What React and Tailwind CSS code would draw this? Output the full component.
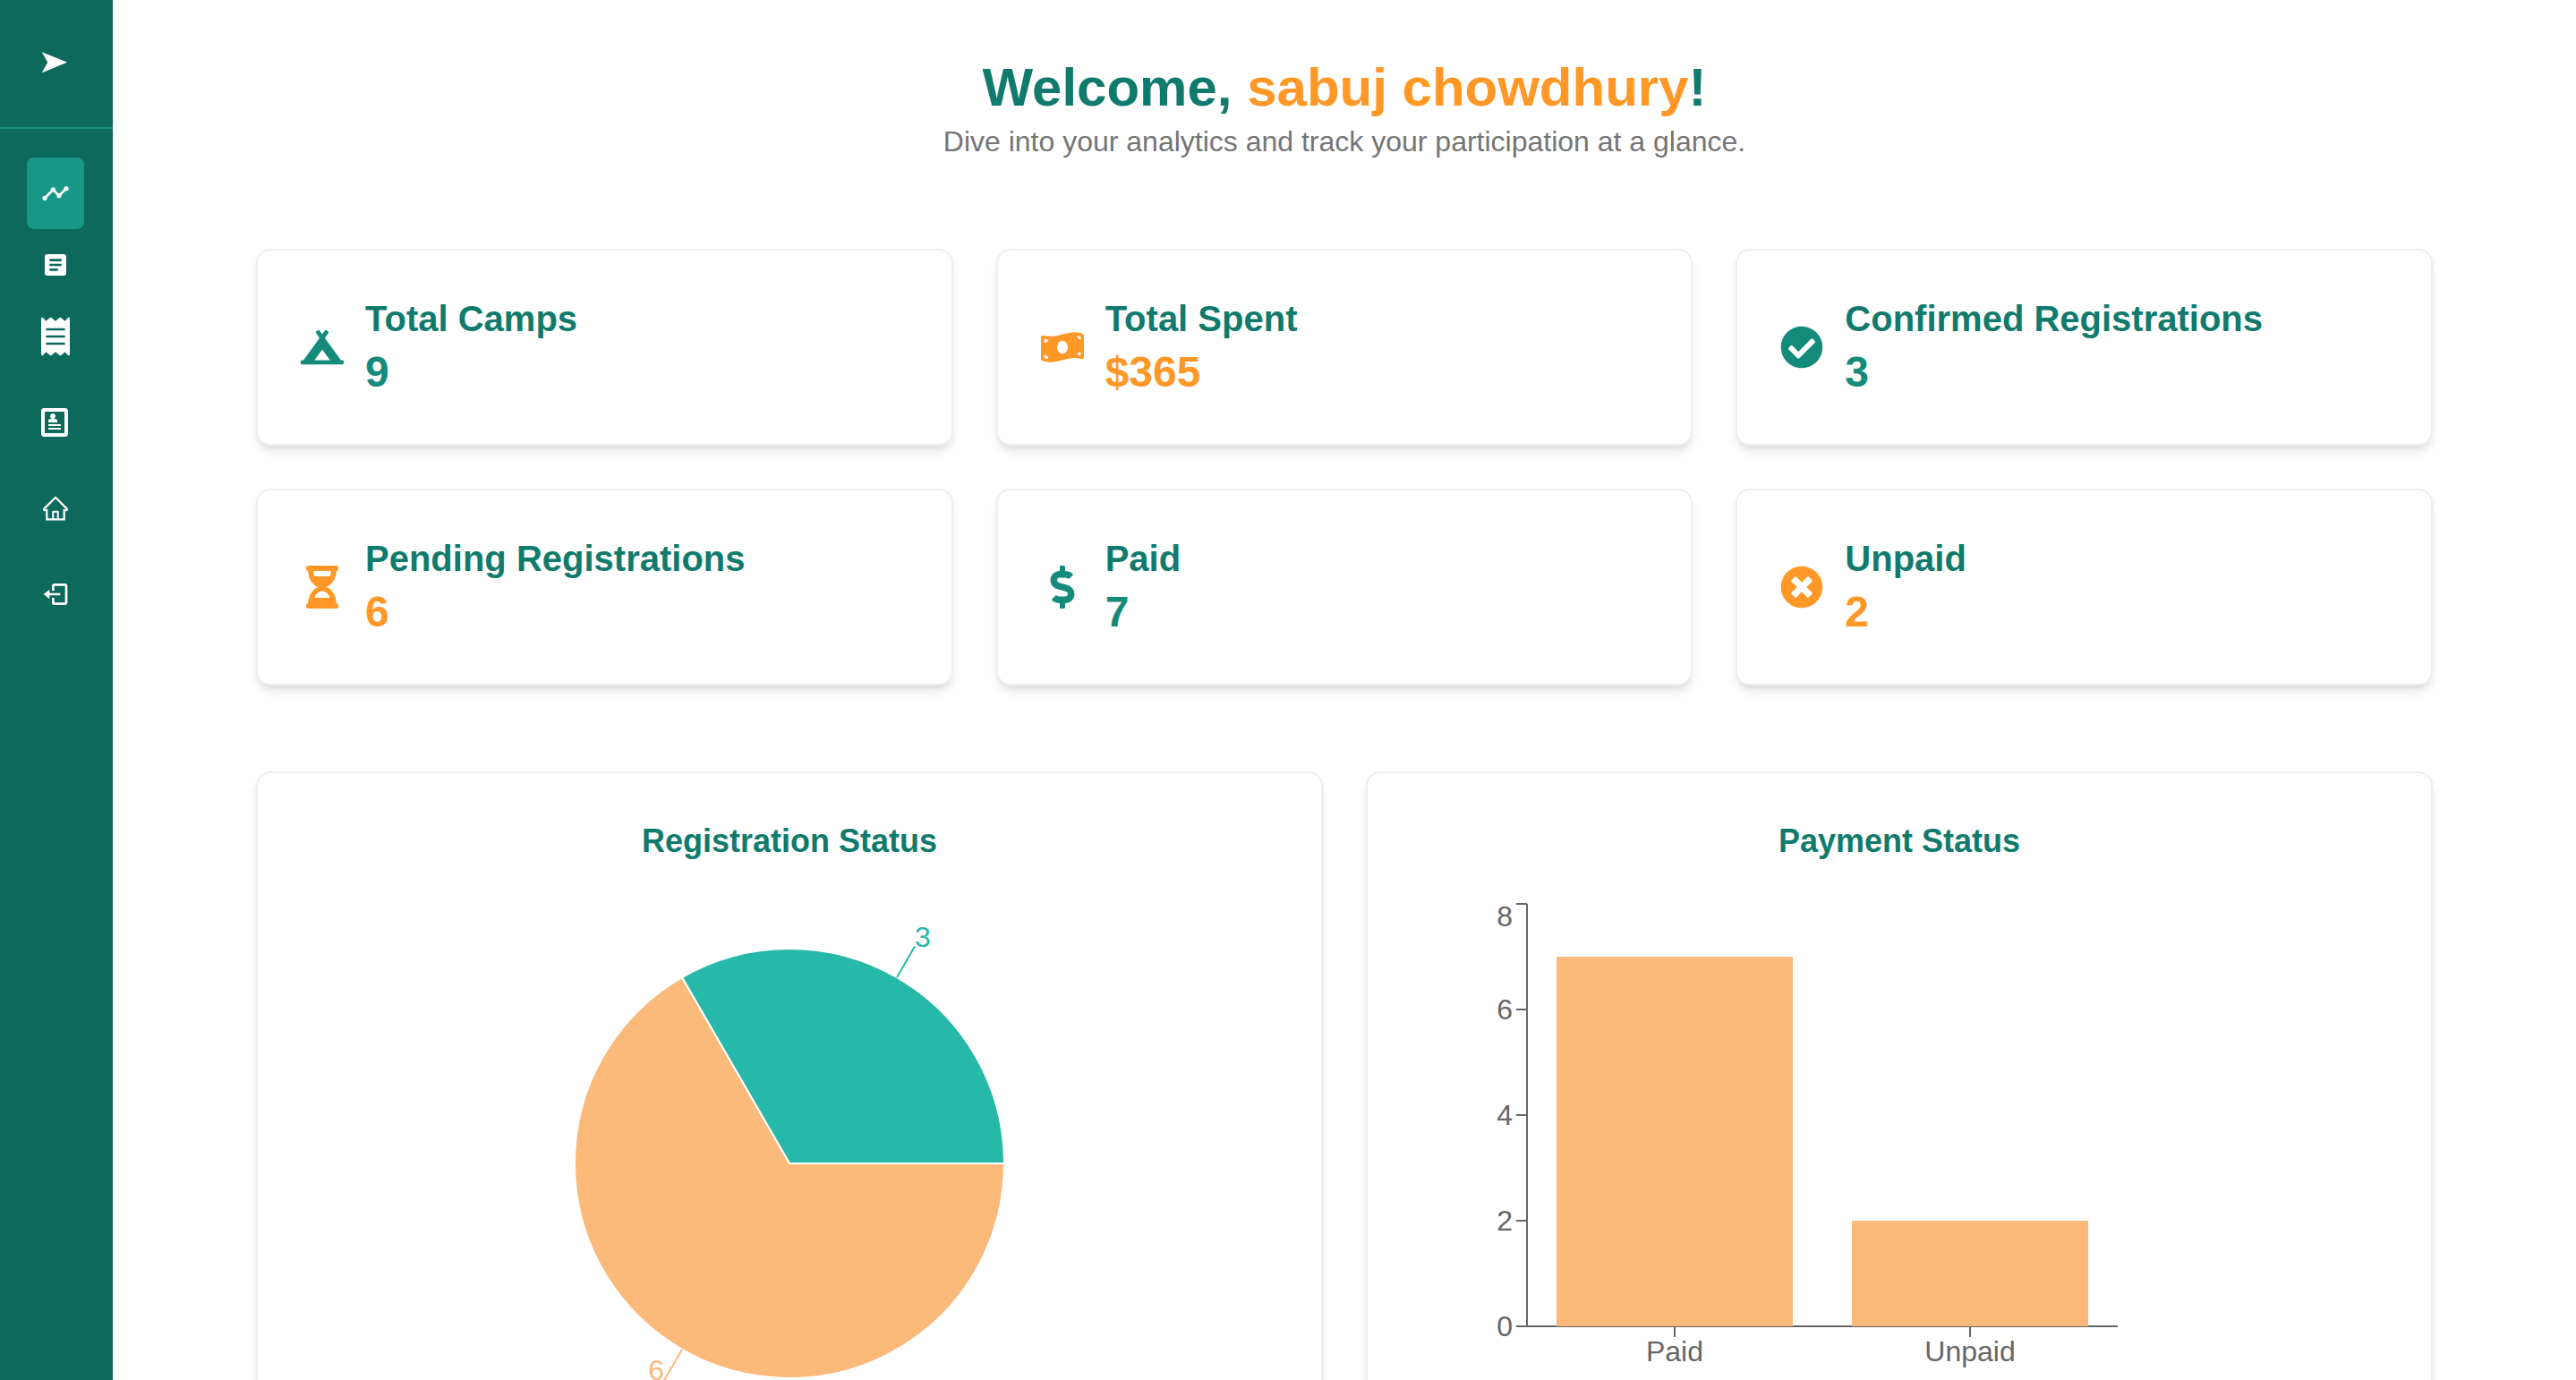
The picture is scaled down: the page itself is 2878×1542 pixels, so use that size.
import React from "react";
import { MdTimeline, MdArticle } from "react-icons/md";
import {
  FaReceipt,
  FaCampground,
  FaMoneyBillWave,
  FaCheckCircle,
  FaHourglassHalf,
  FaDollarSign,
  FaTimesCircle,
} from "react-icons/fa";
import { ImProfile } from "react-icons/im";
import { AiOutlineHome } from "react-icons/ai";
import { BiLogOut } from "react-icons/bi";

const mainLinks = [
  { label: "Analytics", Icon: MdTimeline, size: "size-8", active: true },
  { label: "Registered camps", Icon: MdArticle, size: "size-8" },
  { label: "Payment history", Icon: FaReceipt, size: "h-11 w-8" },
];

const stats = [
  { title: "Total Camps", value: "9", Icon: FaCampground, tone: "text-[#148a7b]" },
  { title: "Total Spent", value: "$365", Icon: FaMoneyBillWave, tone: "text-[#ff9827]" },
  { title: "Confirmed Registrations", value: "3", Icon: FaCheckCircle, tone: "text-[#148a7b]" },
  { title: "Pending Registrations", value: "6", Icon: FaHourglassHalf, tone: "text-[#ff9827]" },
  { title: "Paid", value: "7", Icon: FaDollarSign, tone: "text-[#148a7b]" },
  { title: "Unpaid", value: "2", Icon: FaTimesCircle, tone: "text-[#ff9827]" },
];

const cardClass =
  "rounded-2xl border-2 border-[#eeeeee] bg-white p-12 shadow-[0_8px_12px_-2px_rgba(0,0,0,0.1),0_4px_8px_-4px_rgba(0,0,0,0.1)]";

function NavLink({ label, Icon, size = "size-8", active }) {
  return (
    <a
      href="#"
      aria-label={label}
      className={`flex h-20 w-16 items-center justify-center rounded-lg ${active ? "bg-[#189788]" : ""}`}
    >
      <Icon className={size} />
    </a>
  );
}

function Sidebar() {
  return (
    <aside className="flex w-[126px] shrink-0 flex-col bg-[#0c695b] text-white">
      <div className="flex h-36 items-center border-b-2 border-[#189788] pl-[30px]">
        <button type="button" aria-label="Toggle menu" className="flex h-16 w-16 items-center justify-center">
          <svg viewBox="0 0 32 32" className="size-8" fill="currentColor">
            <path d="M1 3.6Q1 3.2 1.6 3.4L28.3 14.3Q29.1 14.7 28.3 15.1L1.6 26Q1 26.2 1 25.8L7.2 14.7Z" />
          </svg>
        </button>
      </div>
      <nav className="flex flex-col gap-4 pt-8 pl-[30px]">
        <div className="flex flex-col">
          {mainLinks.map((link) => (
            <NavLink key={link.label} {...link} />
          ))}
        </div>
        <NavLink label="Profile" Icon={ImProfile} />
        <NavLink label="Home" Icon={AiOutlineHome} />
        <button type="button" aria-label="Log out" className="flex h-20 w-16 items-center justify-center">
          <BiLogOut className="size-8" />
        </button>
      </nav>
    </aside>
  );
}

function StatCard({ title, value, Icon, tone }) {
  return (
    <div className={`flex items-center gap-6 ${cardClass}`}>
      <Icon className={`size-12 shrink-0 ${tone}`} />
      <div>
        <h3 className="text-[40px] leading-[56px] font-bold text-[#107b6c]">{title}</h3>
        <p className={`text-5xl leading-[64px] font-bold ${tone}`}>{value}</p>
      </div>
    </div>
  );
}

function RegistrationPie() {
  return (
    <svg viewBox="0 0 800 600" className="mx-auto h-[600px] w-[800px]" fontSize="32" role="img" aria-label="Registration status">
      <g stroke="#fff" strokeWidth="2">
        <path d="M400 300H640A240 240 0 0 0 280 92.15Z" fill="#26b8a8" />
        <path d="M400 300L280 92.15A240 240 0 1 0 640 300Z" fill="#fbb97a" />
      </g>
      <path d="M520 92.15L540 57.5" stroke="#26b8a8" strokeWidth="2" />
      <path d="M280 507.85L260 542.5" stroke="#fbb97a" strokeWidth="2" />
      <text x="540" y="58" fill="#26b8a8">3</text>
      <text x="260" y="542" textAnchor="end" fill="#fbb97a">6</text>
    </svg>
  );
}

function PaymentBars() {
  const bars = [
    { name: "Paid", count: 7 },
    { name: "Unpaid", count: 2 },
  ];
  return (
    <svg viewBox="0 0 800 600" className="h-[600px] w-[800px]" fontSize="32" role="img" aria-label="Payment status">
      <g stroke="#666" strokeWidth="2">
        <path d="M130 10V482H790" fill="none" />
        {[0, 2, 4, 6, 8].map((v) => (
          <path key={v} d={`M118 ${482 - v * 59}H130`} />
        ))}
        {bars.map((b, i) => (
          <path key={b.name} d={`M${295 + i * 330} 482V494`} />
        ))}
      </g>
      {bars.map((b, i) => (
        <rect key={b.name} x={163 + i * 330} y={482 - b.count * 59} width="264" height={b.count * 59} fill="#fbb97a" />
      ))}
      <g fill="#666" textAnchor="end">
        {[0, 2, 4, 6].map((v) => (
          <text key={v} x="114" y={493 - v * 59}>{v}</text>
        ))}
        <text x="114" y="35">8</text>
      </g>
      <g fill="#666" textAnchor="middle">
        {bars.map((b, i) => (
          <text key={b.name} x={295 + i * 330} y="521">{b.name}</text>
        ))}
      </g>
    </svg>
  );
}

function ChartCard({ title, children }) {
  return (
    <section className={cardClass}>
      <h3 className="mb-8 text-center text-4xl leading-[56px] font-bold text-[#107b6c]">{title}</h3>
      {children}
    </section>
  );
}

export default function App() {
  return (
    <div className="flex h-screen overflow-hidden bg-white font-['Liberation_Sans',Arial,sans-serif]">
      <Sidebar />
      <main className="min-w-0 flex-1 overflow-y-auto [scrollbar-width:none]">
        <div className="mx-auto max-w-[2560px] px-16 pt-[62px] pb-16">
          <header className="mb-24 text-center">
            <h1 className="text-6xl leading-[72px] font-bold text-[#107b6c]">
              Welcome, <span className="text-[#ff9827]">sabuj chowdhury</span>!
            </h1>
            <p className="text-[32px] leading-[48px] text-[#757575]">
              Dive into your analytics and track your participation at a glance.
            </p>
          </header>
          <div className="mb-24 grid grid-cols-3 gap-12">
            {stats.map((s) => (
              <StatCard key={s.title} {...s} />
            ))}
          </div>
          <div className="grid grid-cols-2 gap-12">
            <ChartCard title="Registration Status">
              <RegistrationPie />
            </ChartCard>
            <ChartCard title="Payment Status">
              <PaymentBars />
            </ChartCard>
          </div>
        </div>
      </main>
    </div>
  );
}
